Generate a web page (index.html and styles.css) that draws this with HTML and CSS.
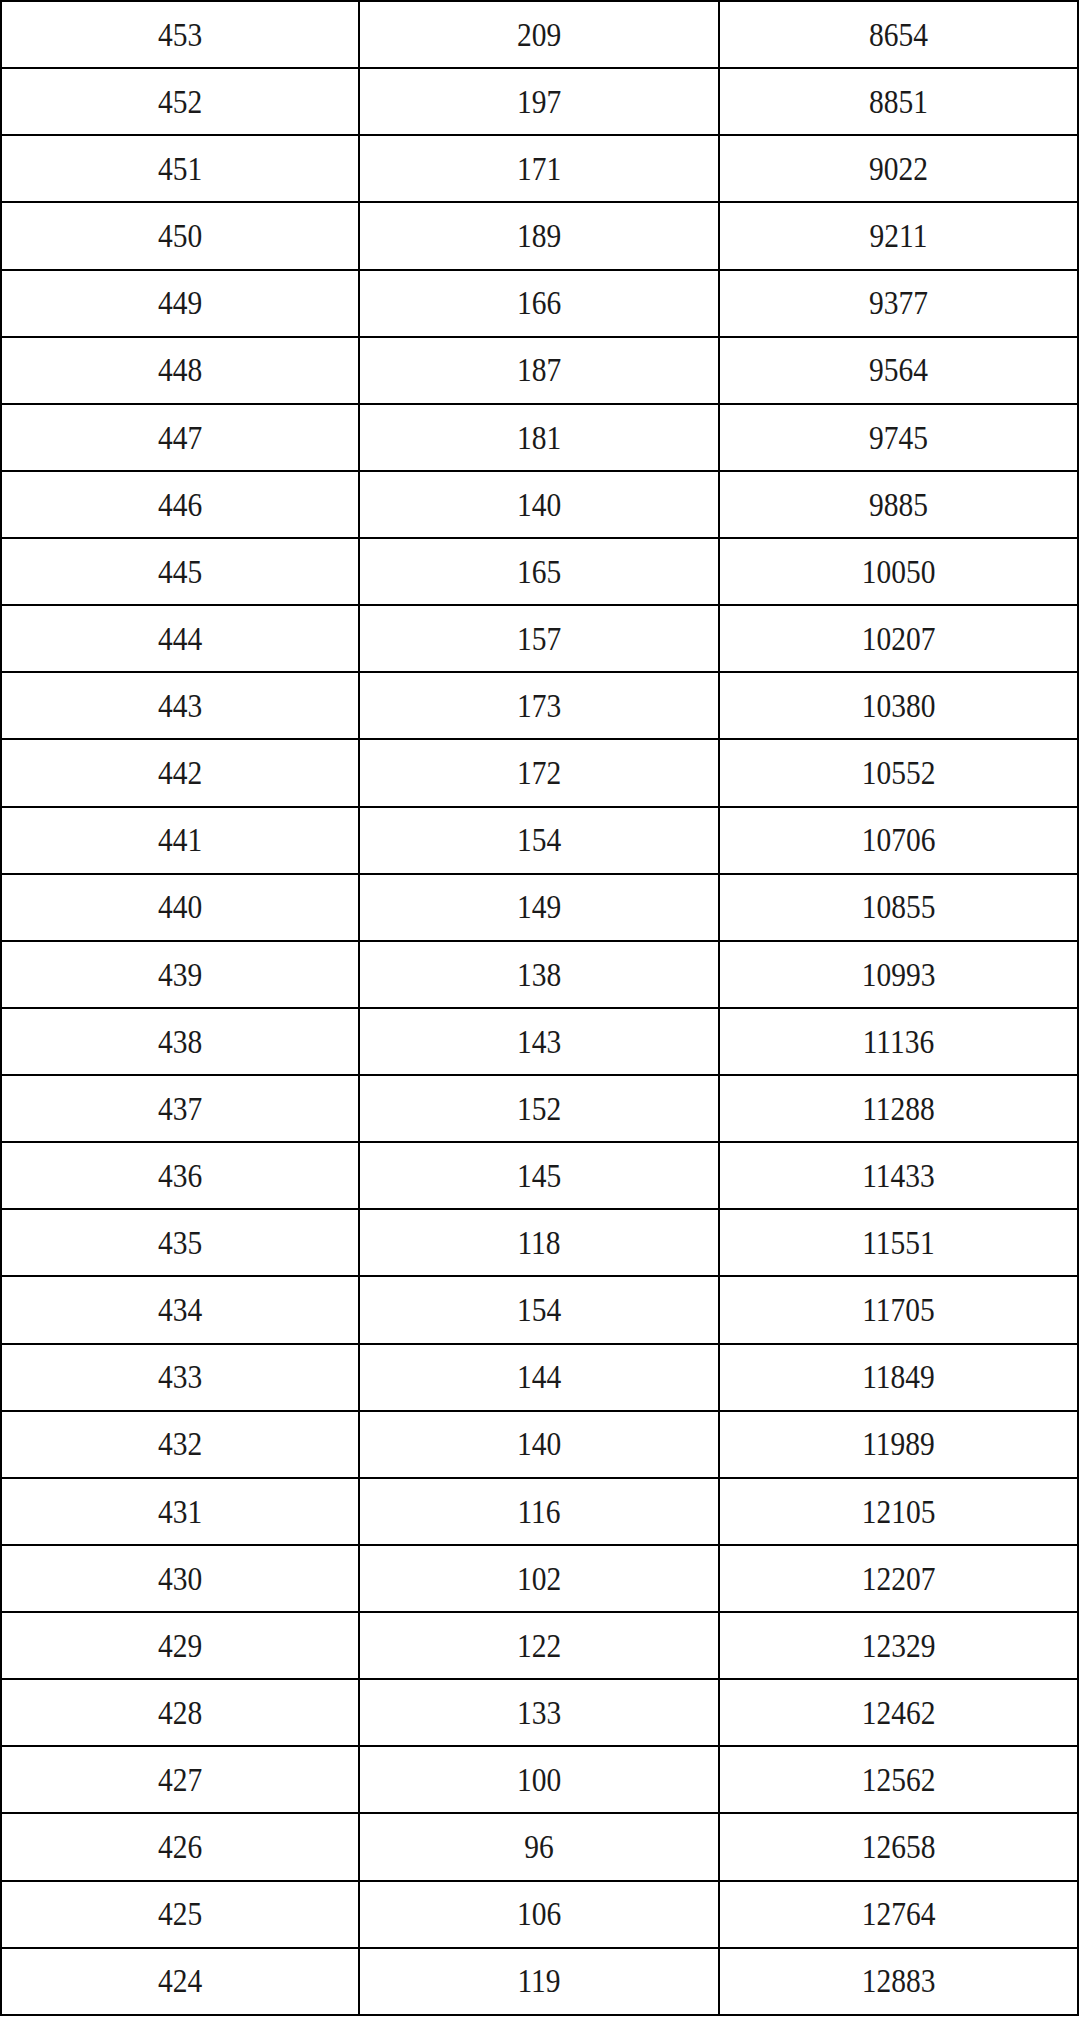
FILE: index.html
```html
<!DOCTYPE html>
<html lang="zh">
<head>
<meta charset="utf-8">
<title>分数段表</title>
<link rel="stylesheet" href="styles.css">
</head>
<body>
<div class="grid" id="grid">
<div class="cell"><span>453</span></div><div class="cell"><span>209</span></div><div class="cell"><span>8654</span></div>
<div class="cell"><span>452</span></div><div class="cell"><span>197</span></div><div class="cell"><span>8851</span></div>
<div class="cell"><span>451</span></div><div class="cell"><span>171</span></div><div class="cell"><span>9022</span></div>
<div class="cell"><span>450</span></div><div class="cell"><span>189</span></div><div class="cell"><span>9211</span></div>
<div class="cell"><span>449</span></div><div class="cell"><span>166</span></div><div class="cell"><span>9377</span></div>
<div class="cell"><span>448</span></div><div class="cell"><span>187</span></div><div class="cell"><span>9564</span></div>
<div class="cell"><span>447</span></div><div class="cell"><span>181</span></div><div class="cell"><span>9745</span></div>
<div class="cell"><span>446</span></div><div class="cell"><span>140</span></div><div class="cell"><span>9885</span></div>
<div class="cell"><span>445</span></div><div class="cell"><span>165</span></div><div class="cell"><span>10050</span></div>
<div class="cell"><span>444</span></div><div class="cell"><span>157</span></div><div class="cell"><span>10207</span></div>
<div class="cell"><span>443</span></div><div class="cell"><span>173</span></div><div class="cell"><span>10380</span></div>
<div class="cell"><span>442</span></div><div class="cell"><span>172</span></div><div class="cell"><span>10552</span></div>
<div class="cell"><span>441</span></div><div class="cell"><span>154</span></div><div class="cell"><span>10706</span></div>
<div class="cell"><span>440</span></div><div class="cell"><span>149</span></div><div class="cell"><span>10855</span></div>
<div class="cell"><span>439</span></div><div class="cell"><span>138</span></div><div class="cell"><span>10993</span></div>
<div class="cell"><span>438</span></div><div class="cell"><span>143</span></div><div class="cell"><span>11136</span></div>
<div class="cell"><span>437</span></div><div class="cell"><span>152</span></div><div class="cell"><span>11288</span></div>
<div class="cell"><span>436</span></div><div class="cell"><span>145</span></div><div class="cell"><span>11433</span></div>
<div class="cell"><span>435</span></div><div class="cell"><span>118</span></div><div class="cell"><span>11551</span></div>
<div class="cell"><span>434</span></div><div class="cell"><span>154</span></div><div class="cell"><span>11705</span></div>
<div class="cell"><span>433</span></div><div class="cell"><span>144</span></div><div class="cell"><span>11849</span></div>
<div class="cell"><span>432</span></div><div class="cell"><span>140</span></div><div class="cell"><span>11989</span></div>
<div class="cell"><span>431</span></div><div class="cell"><span>116</span></div><div class="cell"><span>12105</span></div>
<div class="cell"><span>430</span></div><div class="cell"><span>102</span></div><div class="cell"><span>12207</span></div>
<div class="cell"><span>429</span></div><div class="cell"><span>122</span></div><div class="cell"><span>12329</span></div>
<div class="cell"><span>428</span></div><div class="cell"><span>133</span></div><div class="cell"><span>12462</span></div>
<div class="cell"><span>427</span></div><div class="cell"><span>100</span></div><div class="cell"><span>12562</span></div>
<div class="cell"><span>426</span></div><div class="cell"><span>96</span></div><div class="cell"><span>12658</span></div>
<div class="cell"><span>425</span></div><div class="cell"><span>106</span></div><div class="cell"><span>12764</span></div>
<div class="cell"><span>424</span></div><div class="cell"><span>119</span></div><div class="cell"><span>12883</span></div>
</div>
</body>
</html>
```
FILE: styles.css
```css
html, body {
  margin: 0;
  padding: 0;
  background: #ffffff;
}
.grid {
  display: grid;
  grid-template-columns: 356px 358px 357px;
  grid-auto-rows: 65.13px;
  gap: 2px;
  padding: 2px;
  width: 1075px;
  background: #000000;
}
.cell {
  background: #ffffff;
  display: flex;
  align-items: center;
  justify-content: center;
  font-family: "Liberation Serif", "Noto Sans CJK SC", serif;
  font-size: 29.5px;
  line-height: 1;
  color: #1a1a1a;
  padding-top: 2px;
  box-sizing: border-box;
}
.cell span {
  display: inline-block;
  transform: scaleY(1.12);
}
```
